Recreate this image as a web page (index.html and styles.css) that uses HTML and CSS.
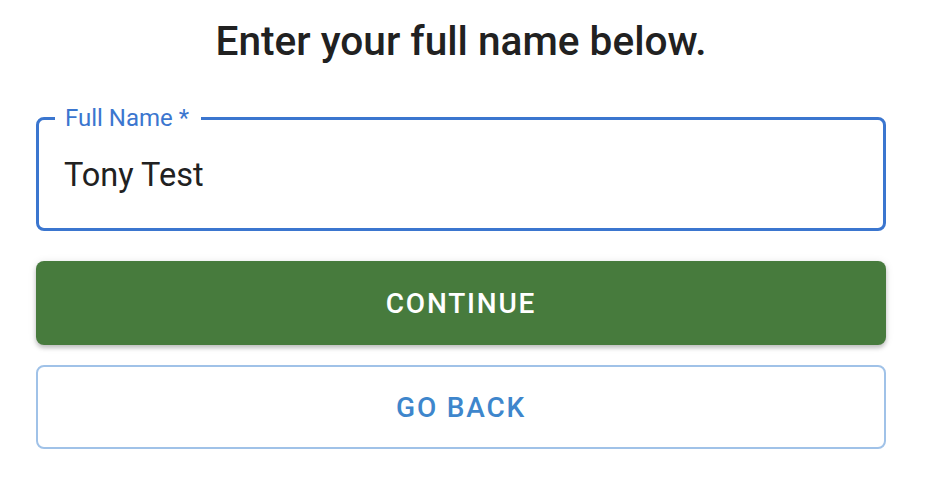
FILE: index.html
```html
<!DOCTYPE html>
<html lang="en">
<head>
  <meta charset="UTF-8">
  <title>Full Name</title>
  <link rel="stylesheet" href="styles.css">
</head>
<body>
  <div class="name-step">
    <h2 class="name-title">Enter your full name below.</h2>

    <!-- Outlined text field, focused -->
    <fieldset class="name-field">
      <legend>Full Name *</legend>
      <input type="text" class="name-input" value="Tony Test">
    </fieldset>

    <button class="btn btn-continue">Continue</button>
    <button class="btn btn-back">Go Back</button>
  </div>
</body>
</html>
```

FILE: styles.css
```css
body {
  margin: 0;
  background: #fff;
  font-family: Roboto, "Liberation Sans", sans-serif;
  color: #212121;
}

.name-step {
  width: 850px;
  margin-left: 36px;
  display: flex;
  flex-direction: column;
}

.name-title {
  margin: 14px 0 0;
  font-size: 40.6px;
  font-weight: 500;
  line-height: 54px;
  text-align: center;
  color: #212121;
}

/* ====== Outlined field ====== */
.name-field {
  margin: 38px 0 0;
  padding: 0 0 0 16px;
  min-width: 0;
  height: 125px;
  border: 3px solid #3b76cf;
  border-radius: 8px;
  box-sizing: border-box;
}
.name-field legend {
  padding: 0 12px 0 10px;
  font-size: 24px;
  line-height: 24px;
  color: #3b76cf;
}
.name-input {
  display: block;
  width: 100%;
  box-sizing: border-box;
  border: none;
  outline: none;
  padding: 26px 0 0 9px;
  font-family: inherit;
  font-size: 32.5px;
  color: #212121;
  background: transparent;
}

/* ====== Buttons ====== */
.btn {
  height: 84px;
  border-radius: 8px;
  font-family: inherit;
  font-size: 28px;
  font-weight: 500;
  letter-spacing: 1.8px;
  text-transform: uppercase;
  cursor: pointer;
}
.btn-continue {
  margin-top: 30px;
  border: none;
  background: #477b3d;
  color: #fff;
  box-shadow: 0 3px 4px rgba(0, 0, 0, 0.2), 0 1px 8px rgba(0, 0, 0, 0.1);
}
.btn-back {
  margin-top: 20px;
  border: 2px solid #a0c2e8;
  background: #fff;
  color: #3e86cc;
}
```
